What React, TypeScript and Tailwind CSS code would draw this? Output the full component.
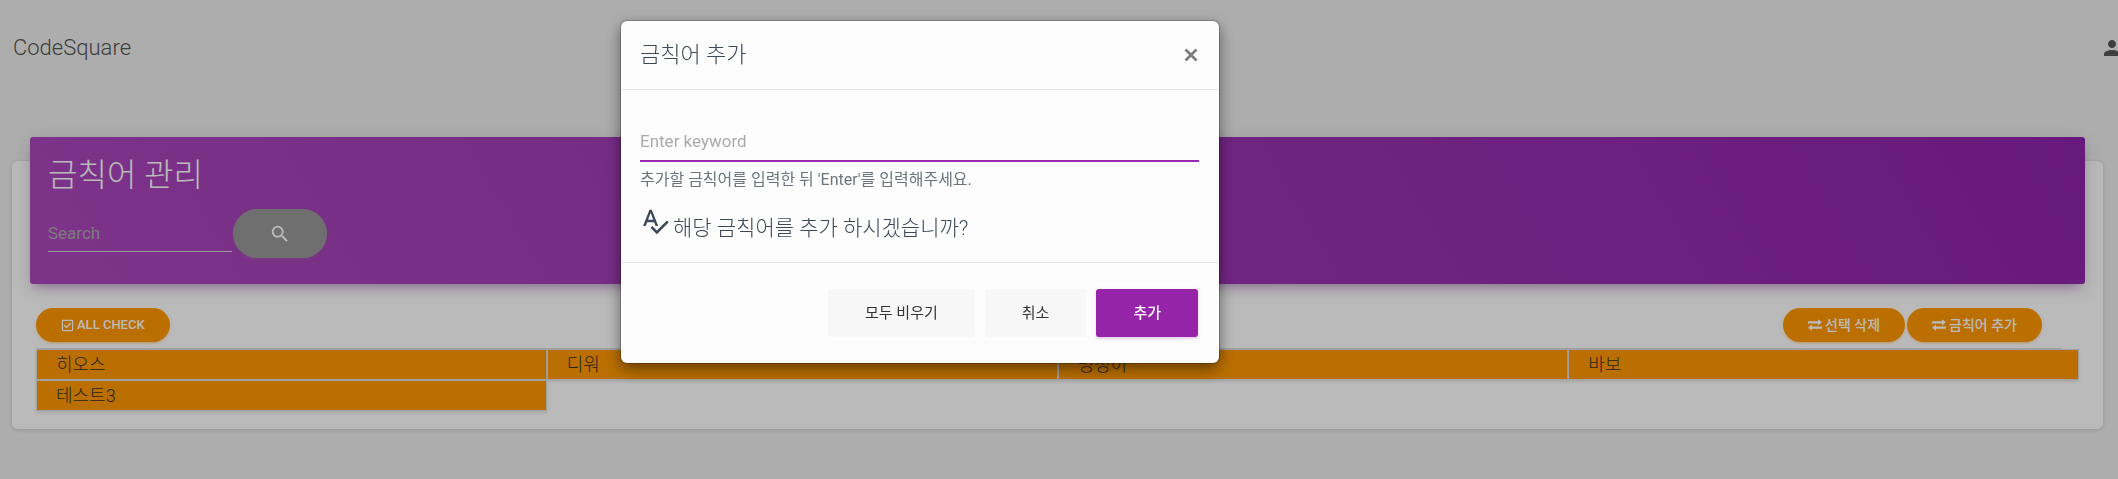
import { MdPerson, MdSearch, MdSpellcheck } from "react-icons/md";
import { FaRegCheckSquare } from "react-icons/fa";
import type { ReactNode } from "react";

const keywords = ["히오스", "디워", "멍청이", "바보", "테스트3"];

function ExchangeIcon() {
  return (
    <svg width="14" height="12" viewBox="0 0 14 12" fill="currentColor" aria-hidden="true">
      <path d="M0 2.2h10V0.2L14 3.3L10 6.4V4.4H0z" />
      <path d="M14 7.6H4V5.6L0 8.7L4 11.8V9.8H14z" />
    </svg>
  );
}

function PillButton({ icon, children }: { icon: ReactNode; children: ReactNode }) {
  return (
    <button
      type="button"
      className="flex h-[34px] items-center gap-[3px] rounded-full bg-[#ff9800] px-[25px] font-medium text-white shadow-[0_2px_2px_0_rgba(255,152,0,0.14),0_3px_1px_-2px_rgba(255,152,0,0.2),0_1px_5px_0_rgba(255,152,0,0.12)]"
    >
      {icon}
      {children}
    </button>
  );
}

function Page() {
  return (
    <div className="min-h-screen bg-[#eee]">
      <header className="flex items-center justify-between overflow-hidden pt-8 pl-[13px]">
        <a href="#" className="text-[22px] leading-8 font-light text-[#555]">
          CodeSquare
        </a>
        <a href="#" aria-label="Profile" className="-mr-1.5 text-[#555]">
          <MdPerson size={24} />
        </a>
      </header>

      <main className="pt-[97px] pr-[15px] pb-10 pl-3">
        <section className="rounded-md bg-white px-[18px] shadow-[0_1px_4px_0_rgba(0,0,0,0.14)]">
          <div className="-translate-y-6 rounded-[3px] bg-[linear-gradient(60deg,#ab47bc,#8e24aa)] px-[18px] pt-4 pb-[26px] shadow-[0_4px_20px_0_rgba(0,0,0,0.14),0_7px_10px_-5px_rgba(156,39,176,0.4)]">
            <h1 className="text-[32px] leading-[44px] font-light text-white">금칙어 관리</h1>
            <form className="mt-3 flex items-center gap-px">
              <input
                type="text"
                aria-label="Search"
                placeholder="Search"
                className="h-9 w-[184px] border-b border-[#d2d2d2] bg-transparent text-[17px] outline-none placeholder:text-[#aaa]"
              />
              <button
                type="button"
                aria-label="Run search"
                className="flex h-[49px] w-[94px] items-center justify-center rounded-full bg-[#999] text-white shadow-[0_2px_2px_0_rgba(153,153,153,0.14),0_1px_5px_0_rgba(153,153,153,0.12)]"
              >
                <MdSearch size={22} />
              </button>
            </form>
          </div>

          <div className="pr-1.5 pb-[18px] pl-1.5">
            <div className="mr-[17px] flex items-center justify-between border-b border-[#ddd] pb-1.5">
              <PillButton icon={<FaRegCheckSquare size={13} />}>
                <span className="text-[13px]">ALL CHECK</span>
              </PillButton>
              <div className="mr-5 flex gap-0.5">
                <PillButton icon={<ExchangeIcon />}>
                  <span className="text-sm">선택 삭제</span>
                </PillButton>
                <PillButton icon={<ExchangeIcon />}>
                  <span className="text-sm">금칙어 추가</span>
                </PillButton>
              </div>
            </div>
            <ul className="grid grid-cols-4">
              {keywords.map((word) => (
                <li
                  key={word}
                  className="border border-[#ddd] bg-[#ff9800] pl-[19px] text-lg leading-[29px] font-light text-[#333] shadow-[0_2px_3px_0_rgba(0,0,0,0.1)]"
                >
                  {word}
                </li>
              ))}
            </ul>
          </div>
        </section>
      </main>
    </div>
  );
}

function AddKeywordDialog() {
  return (
    <div className="fixed inset-0 flex items-start justify-center bg-black/27 pt-[21px] pr-[278px]">
      <div
        role="dialog"
        aria-labelledby="dialog-title"
        className="w-[598px] rounded-md bg-[#fdfdfd] text-[#3c4858] shadow-[0_0_0_1px_rgba(0,0,0,0.2),0_5px_15px_rgba(0,0,0,0.5)]"
      >
        <div className="flex items-center justify-between border-b border-[#e5e5e5] py-[18px] pr-[21px] pl-[19px]">
          <h2 id="dialog-title" className="text-[22px] leading-8 font-light">
            금칙어 추가
          </h2>
          <button type="button" aria-label="Close" className="text-[#7e7e7e]">
            <svg width="14" height="14" viewBox="0 0 14 14" fill="none" stroke="currentColor" strokeWidth="2.8">
              <path d="M1.5 1.5l11 11M12.5 1.5l-11 11" />
            </svg>
          </button>
        </div>
        <div className="border-b border-[#e5e5e5] pt-8 pr-5 pb-[18px] pl-[19px]">
          <input
            type="text"
            aria-label="Enter keyword"
            placeholder="Enter keyword"
            className="block h-10 w-full border-b-2 border-[#9c27b0] bg-transparent text-[17px] outline-none placeholder:text-[#aaa]"
          />
          <p className="mt-1.5 text-base leading-6 text-[#6c757d]">
            추가할 금칙어를 입력한 뒤 'Enter'를 입력해주세요.
          </p>
          <div className="mt-3.5 flex gap-[3px]">
            <MdSpellcheck size={30} />
            <p className="pt-1.5 text-[21px] leading-8 font-light">해당 금칙어를 추가 하시겠습니까?</p>
          </div>
        </div>
        <div className="flex justify-end gap-2.5 py-[26px] pr-[21px] pl-[19px] text-[15px]">
          <button type="button" className="h-12 rounded-[3px] bg-[#f7f7f7] px-[37px] text-[#333]">
            모두 비우기
          </button>
          <button type="button" className="h-12 rounded-[3px] bg-[#f7f7f7] px-[37px] text-[#333]">
            취소
          </button>
          <button
            type="button"
            className="h-12 rounded-[3px] bg-[#9524a9] px-[37px] font-medium text-white shadow-[0_2px_2px_0_rgba(156,39,176,0.14),0_1px_5px_0_rgba(156,39,176,0.12)]"
          >
            추가
          </button>
        </div>
      </div>
    </div>
  );
}

export default function App() {
  return (
    <div className="font-[Roboto,'Noto_Sans_CJK_KR',sans-serif]">
      <Page />
      <AddKeywordDialog />
    </div>
  );
}
